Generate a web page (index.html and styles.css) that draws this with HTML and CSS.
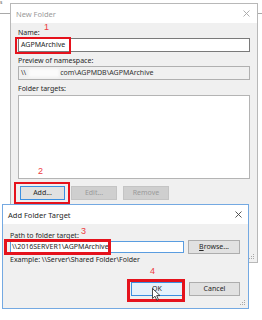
FILE: index.html
```html
<!DOCTYPE html>
<html>
<head>
  <title>New Folder</title>
  <link rel="stylesheet" href="styles.css">
</head>
<body>
  <div class="desktop">
    <div class="bg-window"><span class="bg-text">s</span></div>

    <div class="dialog" id="new-folder">
      <div class="titlebar">
        <span class="title inactive">New Folder</span>
        <svg class="close" width="7" height="7" viewBox="0 0 7 7"><path d="M0.5 0.5 L6.5 6.5 M6.5 0.5 L0.5 6.5" stroke="#a5a5a5" stroke-width="0.9"/></svg>
      </div>
      <div class="dialog-body">
        <label class="field-label">Name:</label>
        <div class="field">AGPMArchive</div>
        <label class="field-label spaced">Preview of namespace:</label>
        <div class="field readonly"><span>\\</span><span class="blurred"></span><span>com\AGPMDB\AGPMArchive</span></div>
        <label class="field-label spaced">Folder targets:</label>
        <div class="list"></div>
        <div class="button-row">
          <button class="btn btn-add focused">Add...</button>
          <button class="btn btn-edit" disabled>Edit...</button>
          <button class="btn btn-remove" disabled>Remove</button>
        </div>
      </div>
      <svg class="grip" width="6" height="6" viewBox="0 0 6 6"><path d="M4 0h1v1h-1z M2 2h1v1h-1z M4 2h1v1h-1z M0 4h1v1h-1z M2 4h1v1h-1z M4 4h1v1h-1z" fill="#a8a8a8"/></svg>
    </div>

    <div class="dialog active" id="add-target">
      <div class="titlebar">
        <span class="title">Add Folder Target</span>
        <svg class="close" width="7" height="7" viewBox="0 0 7 7"><path d="M0.5 0.5 L6.5 6.5 M6.5 0.5 L0.5 6.5" stroke="#444" stroke-width="0.9"/></svg>
      </div>
      <div class="dialog-body">
        <label class="field-label">Path to folder target:</label>
        <div class="path-row">
          <div class="field path-input">\\2016SERVER1\AGPMArchive</div>
          <button class="btn btn-browse"><u>B</u>rowse...</button>
        </div>
        <div class="example">Example: \\Server\Shared Folder\Folder</div>
        <div class="actions">
          <button class="btn btn-ok default">OK</button>
          <button class="btn btn-cancel">Cancel</button>
        </div>
      </div>
      <svg class="grip" width="6" height="6" viewBox="0 0 6 6"><path d="M4 0h1v1h-1z M2 2h1v1h-1z M4 2h1v1h-1z M0 4h1v1h-1z M2 4h1v1h-1z M4 4h1v1h-1z" fill="#a8a8a8"/></svg>
    </div>

    <!-- annotations -->
    <div class="mark mark-name"></div>
    <div class="mark mark-add"></div>
    <div class="mark mark-path thick"></div>
    <div class="mark mark-ok thick"></div>
    <span class="num num-1">1</span>
    <span class="num num-2">2</span>
    <span class="num num-3">3</span>
    <span class="num num-4">4</span>

    <svg class="cursor" width="9" height="13" viewBox="0 0 9 13"><path d="M0.5 0.5 L0.5 10.5 L3 8.2 L4.8 12.2 L6.4 11.5 L4.7 7.6 L8 7.6 Z" fill="#fff" stroke="#222" stroke-width="0.8" stroke-linejoin="round"/></svg>
  </div>
</body>
</html>
```

FILE: styles.css
```css
* {
  box-sizing: border-box;
}

body {
  margin: 0;
  background-color: #fff;
  font-family: "Noto Sans", "Open Sans", sans-serif;
  font-size: 7px;
  color: #262626;
  overflow: hidden;
}

.desktop {
  position: relative;
  width: 262px;
  height: 320px;
}

.bg-window {
  height: 14px;
  border-bottom: 1px solid #a9a9a9;
  overflow: hidden;
}

.bg-text {
  display: block;
  font-size: 5px;
  line-height: 5px;
  color: #666;
}

/* dialogs */

.dialog {
  position: absolute;
  display: flex;
  flex-direction: column;
  background-color: #f0f0f0;
  border: 1px solid #b8b8b8;
}

#new-folder {
  left: 10px;
  top: 3px;
  width: 248px;
  height: 260px;
}

#add-target {
  left: 2px;
  top: 204px;
  width: 247px;
  height: 105px;
  border-color: #74a9e2;
}

.titlebar {
  height: 19px;
  flex: none;
  display: flex;
  align-items: center;
  justify-content: space-between;
  padding: 0 7px 0 5px;
  background-color: #fff;
}

#add-target .titlebar {
  padding-right: 6px;
}

.title {
  font-size: 7.5px;
}

.title.inactive {
  color: #9a9a9a;
}

.dialog-body {
  flex: 1;
  display: flex;
  flex-direction: column;
  padding: 5px 7px 0 7px;
}

#add-target .dialog-body {
  padding: 7px 8px 0 7px;
}

.field-label {
  display: block;
  height: 9px;
  line-height: 9px;
  margin-bottom: 1px;
}

.field-label.spaced {
  margin-top: 4px;
}

#add-target .field-label {
  margin-bottom: 0;
}

.field {
  height: 14px;
  line-height: 12px;
  padding: 0 2px;
  border: 1px solid #7a7a7a;
  background-color: #fff;
  white-space: nowrap;
  overflow: hidden;
}

.field.readonly {
  display: flex;
  background-color: #f0f0f0;
  border-color: #b0b0b0;
  color: #333;
}

.blurred {
  width: 30px;
  height: 8px;
  margin: 2px 1px 0 3px;
  background-color: #fbfbfb;
  filter: blur(1px);
}

.list {
  height: 84px;
  margin-top: 1px;
  border: 1px solid #b4b4b4;
  background-color: #fff;
}

.button-row {
  display: flex;
  gap: 6px;
  margin-top: 7px;
  padding-left: 2px;
}

/* buttons */

.btn {
  height: 14px;
  padding: 0;
  font-family: inherit;
  font-size: 7px;
  line-height: 12px;
  color: #262626;
  background-color: #e1e1e1;
  border: 1px solid #adadad;
}

.btn:disabled {
  color: #9a9a9a;
  background-color: #cfcfcf;
  border-color: #c4c4c4;
}

.btn.focused {
  border-color: #3b8fe0;
}

.btn.default {
  background-color: #e5f1fb;
  border-color: #3b8fe0;
}

.btn-add {
  width: 45px;
}

.btn-edit,
.btn-remove {
  width: 46px;
}

.path-row {
  display: flex;
  align-items: center;
  gap: 4px;
}

.path-input {
  width: 174px;
  height: 12px;
  line-height: 10px;
  padding: 0 1px;
  border-color: #5a9de0;
}

.btn-browse {
  width: 52px;
  margin-left: auto;
}

.example {
  height: 9px;
  line-height: 9px;
  margin-top: 1px;
}

.actions {
  display: flex;
  justify-content: flex-end;
  gap: 6px;
  margin-top: 18px;
}

.btn-ok {
  width: 52px;
}

.btn-cancel {
  width: 51px;
}

.grip {
  position: absolute;
  right: 2px;
  bottom: 2px;
}

/* annotations */

.mark {
  position: absolute;
  border: 2px solid #e5121c;
}

.mark.thick {
  border-width: 3px;
}

.mark-name {
  left: 15px;
  top: 37px;
  width: 56px;
  height: 17px;
}

.mark-add {
  left: 14px;
  top: 182px;
  width: 56px;
  height: 22px;
}

.mark-path {
  left: 4px;
  top: 239px;
  width: 107px;
  height: 16px;
}

.mark-ok {
  left: 127px;
  top: 279px;
  width: 58px;
  height: 23px;
}

.num {
  position: absolute;
  font-family: "Liberation Sans", Arial, sans-serif;
  font-size: 9px;
  line-height: 9px;
  color: #ee3b3f;
}

.num-1 {
  left: 44px;
  top: 23px;
}

.num-2 {
  left: 38px;
  top: 167px;
}

.num-3 {
  left: 81px;
  top: 227px;
}

.num-4 {
  left: 150px;
  top: 267px;
}

.cursor {
  position: absolute;
  left: 152px;
  top: 288px;
}
```
